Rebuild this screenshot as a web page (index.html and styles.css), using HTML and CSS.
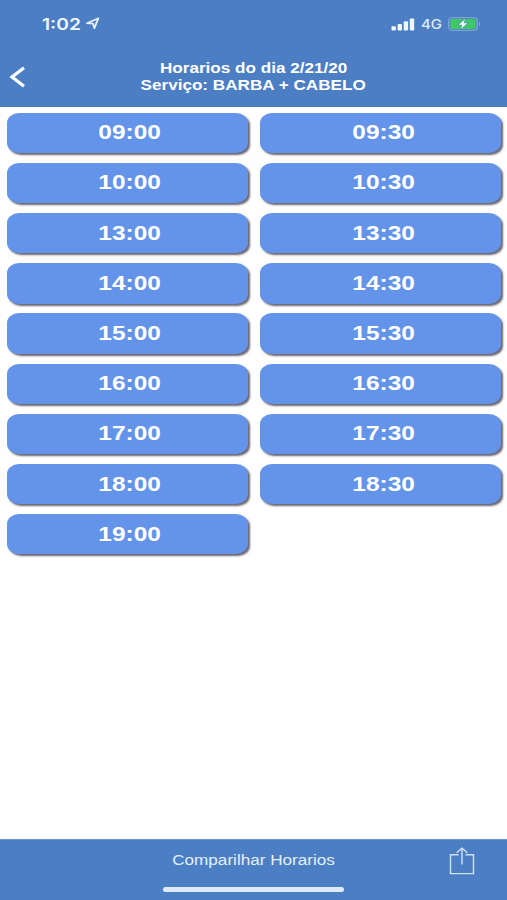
FILE: index.html
```
<!DOCTYPE html>
<html lang="pt-BR">
<head>
    <meta charset="UTF-8">
    <meta name="viewport" content="width=device-width, initial-scale=1.0">
    <title>Horarios</title>
    <link rel="stylesheet" href="styles.css">
</head>
<body>
    <header>
        <div class="status-bar">
            <div class="status-left">
                <span class="clock">1:02</span>
                <svg class="location" width="14" height="13" viewBox="0 0 14 13">
                    <path d="M1 6.2 L12.4 1.2 L8.4 11.2 L7 6.6 Z" fill="none" stroke="#e6f1fc" stroke-width="1.8" stroke-linejoin="round"/>
                </svg>
            </div>
            <div class="status-right">
                <svg class="signal" width="24" height="13" viewBox="0 0 24 13" fill="#f0f7fd">
                    <rect x="0.5" y="8.2" width="4.4" height="4.3" rx="1"/>
                    <rect x="6.6" y="6" width="4.4" height="6.5" rx="1"/>
                    <rect x="12.7" y="3.3" width="4.4" height="9.2" rx="1"/>
                    <rect x="18.8" y="0.4" width="4.4" height="12.1" rx="1"/>
                </svg>
                <span class="network">4G</span>
                <svg class="battery" width="34" height="14" viewBox="0 0 34 14">
                    <rect x="0.7" y="0.7" width="28.6" height="12.6" rx="3.5" fill="none" stroke="#83aede" stroke-width="1.1"/>
                    <rect x="2.2" y="2" width="25.6" height="10" rx="2.2" fill="#3fc765"/>
                    <path d="M31 5 Q33.2 7 31 9 Z" fill="#83aede"/>
                    <path d="M17 2.2 L10.8 7.8 H14.4 L13 11.8 L19.2 6.2 H15.7 Z" fill="#fff" stroke="#4c9aa4" stroke-width="1.4" paint-order="stroke"/>
                </svg>
            </div>
        </div>
        <div class="nav-bar">
            <svg class="back" width="18" height="24" viewBox="0 0 18 24">
                <path d="M15 2.8 L3 12 L15 21.2" fill="none" stroke="#fff" stroke-width="3.2"/>
            </svg>
            <h1>
                <span>Horarios do dia 2/21/20</span>
                <span>Serviço: BARBA + CABELO</span>
            </h1>
        </div>
    </header>

    <main>
        <button><span>09:00</span></button>
        <button><span>09:30</span></button>
        <button><span>10:00</span></button>
        <button><span>10:30</span></button>
        <button><span>13:00</span></button>
        <button><span>13:30</span></button>
        <button><span>14:00</span></button>
        <button><span>14:30</span></button>
        <button><span>15:00</span></button>
        <button><span>15:30</span></button>
        <button><span>16:00</span></button>
        <button><span>16:30</span></button>
        <button><span>17:00</span></button>
        <button><span>17:30</span></button>
        <button><span>18:00</span></button>
        <button><span>18:30</span></button>
        <button><span>19:00</span></button>
    </main>

    <footer>
        <div class="toolbar">
            <span class="share-label">Comparilhar Horarios</span>
            <svg class="share" width="26" height="28" viewBox="0 0 26 28" fill="none" stroke="#cfe2f8" stroke-width="1.4">
                <path d="M9.5 7.7 H1.5 V26.6 H24.5 V7.7 H16.5"/>
                <path d="M13 17.5 V1.5 M7.6 5.8 L13 1.2 L18.4 5.8"/>
            </svg>
        </div>
        <div class="home-indicator"></div>
    </footer>
</body>
</html>
```
FILE: styles.css
```
* {
    margin: 0;
    padding: 0;
    box-sizing: border-box;
}

body {
    display: flex;
    flex-direction: column;
    height: 100vh;
    overflow: hidden;
    background: #fefefe;
    color: #fff;
    font-family: "Liberation Sans", Arial, sans-serif;
}

header {
    height: 107px;
    background: #4c7ec4;
    border-bottom: 1px solid #4876b8;
}

.status-bar {
    display: flex;
    justify-content: space-between;
    height: 48px;
    padding: 0 25px 0 42px;
}

.status-left,
.status-right {
    display: flex;
    align-items: center;
}

/* wide lettering */
.clock,
.network,
h1 span,
button span,
.share-label {
    display: block;
    width: fit-content;
    white-space: nowrap;
    transform: scaleX(1.222);
}

.clock {
    width: 38px;
    font: 600 16px/20px Inter, sans-serif;
    transform: scaleX(1.2);
    transform-origin: left;
    color: #f0f7fd;
}

.location {
    margin-left: 6px;
    margin-top: -2px;
}

.signal {
    margin-right: 6px;
}

.network {
    width: 21px;
    font: 500 13px/20px Inter, sans-serif;
    transform: scaleX(1.15);
    transform-origin: left;
    color: #dcebfa;
}

.battery {
    margin-left: 6px;
}

.nav-bar {
    display: flex;
    align-items: center;
    height: 58px;
    padding: 0 9px;
}

.back {
    flex: none;
    margin-right: -18px;
}

h1 {
    flex: 1;
    font-size: 14px;
    line-height: 17px;
}

h1 span {
    margin: 0 auto;
}

main {
    flex: 1;
    display: grid;
    grid-template-columns: 241px 241px;
    grid-auto-rows: 40.4px;
    gap: 9.8px 12.5px;
    align-content: start;
    padding: 5.6px 6.5px;
}

button {
    display: flex;
    align-items: center;
    justify-content: center;
    border: none;
    border-radius: 12px / 10px;
    background: #6494e9;
    box-shadow: 2px 2px 2px #6b6673;
    color: #fff;
    font: bold 20px "Liberation Sans", Arial, sans-serif;
}

button span {
    margin-left: 6px;
}

footer {
    height: 61px;
    background: #4c7ec4;
    border-top: 1px solid #7197d0;
}

.toolbar {
    display: flex;
    align-items: center;
    height: 42px;
    padding: 0 32px 0 58px;
}

.share-label {
    margin: -2px auto 0;
    font-size: 14px;
    color: #e2effc;
}

.home-indicator {
    width: 181px;
    height: 5px;
    margin: 5px auto 0;
    border-radius: 3px;
    background: #e0eaf6;
}
```
